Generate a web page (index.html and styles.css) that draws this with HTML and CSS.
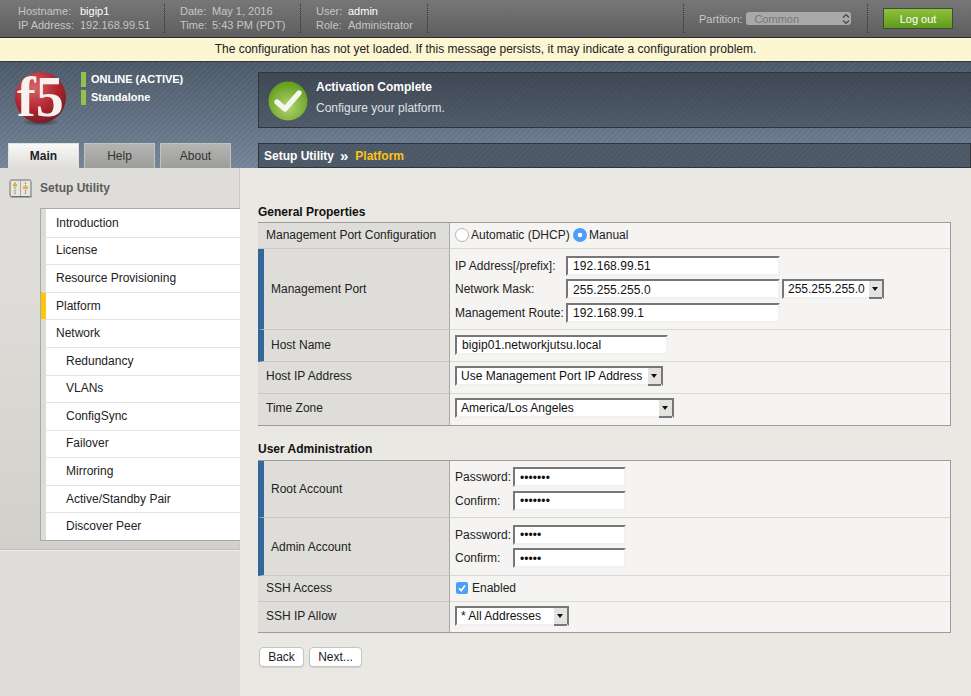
FILE: index.html
```html
<!DOCTYPE html>
<html lang="en">
<head>
<meta charset="utf-8">
<title>BIG-IP Setup Utility</title>
<link rel="stylesheet" href="styles.css">
</head>
<body>
<header class="topbar">
  <div class="meta meta-host">
    <span>Hostname:</span><b>bigip1</b>
    <span>IP Address:</span><span>192.168.99.51</span>
  </div>
  <div class="meta meta-date">
    <span>Date:</span><span>May 1, 2016</span>
    <span>Time:</span><span>5:43 PM (PDT)</span>
  </div>
  <div class="meta meta-user">
    <span>User:</span><b>admin</b>
    <span>Role:</span><span>Administrator</span>
  </div>
  <div class="partition">
    <label class="partition-label">Partition:</label>
    <div class="partition-select">
      <span>Common</span>
      <svg width="8" height="12" viewBox="0 0 8 12" fill="none" stroke="#444" stroke-width="1.2"><path d="M1 4.5 4 1.5 7 4.5M1 7.5 4 10.5 7 7.5"/></svg>
    </div>
  </div>
  <div class="logout-wrap"><button class="logout" type="button">Log out</button></div>
</header>
<div class="message">The configuration has not yet loaded. If this message persists, it may indicate a configuration problem.</div>
<section class="banner">
  <div class="banner-left">
    <div class="identity">
      <svg class="logo" width="62" height="72" viewBox="0 -8 62 72">
        <defs>
          <radialGradient id="ball" cx="0.38" cy="0.3" r="0.8">
            <stop offset="0" stop-color="#d9636b"/>
            <stop offset="0.55" stop-color="#b1252f"/>
            <stop offset="1" stop-color="#6d1a20"/>
          </radialGradient>
          <radialGradient id="shade" cx="0.5" cy="0.5" r="0.5">
            <stop offset="0" stop-color="#1f2730" stop-opacity="0.75"/>
            <stop offset="1" stop-color="#1f2730" stop-opacity="0"/>
          </radialGradient>
        </defs>
        <ellipse cx="25.5" cy="50" rx="19" ry="4" fill="url(#shade)"/>
        <circle cx="25.5" cy="25.5" r="25.5" fill="url(#ball)"/>
        <text x="2" y="44" class="logo-text">f5</text>
      </svg>
      <ul class="status">
        <li>ONLINE (ACTIVE)</li>
        <li>Standalone</li>
      </ul>
    </div>
    <nav class="tabs">
      <a class="tab tab-active">Main</a>
      <a class="tab">Help</a>
      <a class="tab">About</a>
    </nav>
  </div>
  <div class="banner-right">
    <div class="notice">
      <svg width="40" height="40" viewBox="0 0 40 40">
        <defs>
          <radialGradient id="okball" cx="0.5" cy="0.65" r="0.6">
            <stop offset="0" stop-color="#b3d56f"/>
            <stop offset="1" stop-color="#64a01f"/>
          </radialGradient>
        </defs>
        <circle cx="20" cy="20" r="19.5" fill="url(#okball)"/>
        <path d="M9 21 17 28 31 12" fill="none" stroke="#f4f7ee" stroke-width="5.4" stroke-linecap="round" stroke-linejoin="round"/>
      </svg>
      <div class="notice-text">
        <strong>Activation Complete</strong>
        <span>Configure your platform.</span>
      </div>
    </div>
    <div class="crumbs"><b>Setup Utility</b><b class="crumb-sep">&raquo;</b><b class="crumb-current">Platform</b></div>
  </div>
</section>
<div class="workspace">
  <aside class="sidebar">
    <div class="side-top">
      <div class="side-title">
        <svg width="23" height="19" viewBox="0 0 23 19">
          <rect x="1" y="1" width="21" height="16.5" rx="1.5" fill="#e6e5e0" stroke="#6f6f6c"/>
          <path d="M1.5 18.5H22.5V3" fill="none" stroke="#a5a5a1"/>
          <path d="M11.5 1.5V17" stroke="#a7a7a3"/>
          <path d="M6 3.5V15M16.5 3.5V15" stroke="#77776f" stroke-dasharray="1.5 1"/>
          <rect x="4" y="5" width="4" height="2.5" fill="#e2b420"/>
          <rect x="14" y="7.5" width="5" height="2.5" fill="#e2b420"/>
        </svg>
        <span>Setup Utility</span>
      </div>
      <ul class="side-nav">
        <li>Introduction</li>
        <li>License</li>
        <li>Resource Provisioning</li>
        <li class="current">Platform</li>
        <li>Network</li>
        <li class="sub">Redundancy</li>
        <li class="sub">VLANs</li>
        <li class="sub">ConfigSync</li>
        <li class="sub">Failover</li>
        <li class="sub">Mirroring</li>
        <li class="sub">Active/Standby Pair</li>
        <li class="sub">Discover Peer</li>
      </ul>
    </div>
  </aside>
  <main class="content">
    <h2 class="section-title">General Properties</h2>
    <table class="props">
      <colgroup><col class="col-label"><col></colgroup>
      <tr class="h26">
        <th>Management Port Configuration</th>
        <td class="inline-cell">
          <label class="choice"><input type="radio" name="cfg" class="radio"> Automatic (DHCP)</label>
          <label class="choice"><input type="radio" name="cfg" class="radio" checked> Manual</label>
        </td>
      </tr>
      <tr class="h81">
        <th class="req">Management Port</th>
        <td>
          <div class="fields fields-wide">
            <label>IP Address[/prefix]:</label><input class="field w214" value="192.168.99.51">
            <label>Network Mask:</label>
            <div class="with-select"><input class="field w214" value="255.255.255.0"><div class="select w102"><select><option>255.255.255.0</option></select><i class="arrow"></i></div></div>
            <label>Management Route:</label><input class="field w214" value="192.168.99.1">
          </div>
        </td>
      </tr>
      <tr class="h32">
        <th class="req">Host Name</th>
        <td><input class="field w213" value="bigip01.networkjutsu.local"></td>
      </tr>
      <tr class="h32 lifted">
        <th>Host IP Address</th>
        <td><div class="select w208"><select><option>Use Management Port IP Address</option></select><i class="arrow"></i></div></td>
      </tr>
      <tr class="h31 lifted">
        <th>Time Zone</th>
        <td><div class="select w219"><select><option>America/Los Angeles</option></select><i class="arrow"></i></div></td>
      </tr>
    </table>

    <h2 class="section-title second">User Administration</h2>
    <table class="props">
      <colgroup><col class="col-label"><col></colgroup>
      <tr class="h57">
        <th class="req">Root Account</th>
        <td>
          <div class="fields fields-pass">
            <label>Password:</label><input type="password" class="field w113" value="1234567">
            <label>Confirm:</label><input type="password" class="field w113" value="1234567">
          </div>
        </td>
      </tr>
      <tr class="h58">
        <th class="req">Admin Account</th>
        <td>
          <div class="fields fields-pass">
            <label>Password:</label><input type="password" class="field w113" value="12345">
            <label>Confirm:</label><input type="password" class="field w113" value="12345">
          </div>
        </td>
      </tr>
      <tr class="h26">
        <th>SSH Access</th>
        <td class="inline-cell">
          <label class="choice">
            <span class="check"><svg width="12" height="12" viewBox="0 0 12 12"><path d="M3 6.2 5.2 8.6 9 3.4" fill="none" stroke="#fff" stroke-width="1.7"/></svg></span>
            Enabled
          </label>
        </td>
      </tr>
      <tr class="h30">
        <th>SSH IP Allow</th>
        <td><div class="select w114"><select><option>* All Addresses</option></select><i class="arrow"></i></div></td>
      </tr>
    </table>
    <div class="actions">
      <button type="button" class="btn btn-back">Back</button>
      <button type="button" class="btn btn-next">Next...</button>
    </div>
  </main>
</div>
</body>
</html>
```

FILE: styles.css
```css
* { box-sizing: border-box; }
html, body { margin: 0; padding: 0; height: 100%; overflow: hidden; }
body { width: 971px; height: 696px; font: 12px/14px "Liberation Sans", Arial, sans-serif; color: #222; background: #e9e8e3; }
ul { list-style: none; margin: 0; padding: 0; }

.topbar { display: flex; height: 38px; background: linear-gradient(#777, #5e5e5e); border-bottom: 1px solid #2c2c2c; color: #c6c6c6; font-size: 11px; }
.meta { display: grid; align-content: center; height: 29px; margin-top: 4px; padding-bottom: 2px; border-right: 1px dotted #2f2f2f; line-height: 14px; }
.meta b { font-weight: normal; color: #fff; }
.meta-host { width: 165px; padding-left: 18px; grid-template-columns: 62px 1fr; }
.meta-date { width: 136px; padding-left: 15px; grid-template-columns: 32px 1fr; }
.meta-user { width: 127px; padding-left: 15px; grid-template-columns: 32px 1fr; }
.partition { display: flex; align-items: center; gap: 4px; margin-left: auto; width: 185px; height: 29px; margin-top: 4px; padding-left: 15px; border-left: 1px dotted #2f2f2f; border-right: 1px dotted #2f2f2f; }
.partition-select { display: flex; align-items: center; justify-content: space-between; width: 105px; height: 13px; padding: 0 1px 0 8px; border-radius: 3px; background: #a9a9a9; color: #777; }
.logout-wrap { width: 103px; padding: 8px 0 0 15px; }
.logout { display: block; width: 70px; height: 21px; padding: 0; border: 1px solid #3f4a3a; background: linear-gradient(#8fc13b, #5f9a1c); color: #fff; font: 11px "Liberation Sans", Arial, sans-serif; }

.message { height: 24px; background: #fdf6d3; border-bottom: 1px solid #34373b; text-align: center; line-height: 23px; color: #222; }

.banner { display: flex; height: 106px; background: repeating-linear-gradient(135deg, rgba(255,255,255,0.025) 0 2px, rgba(0,0,0,0.025) 2px 4px), linear-gradient(#4d5a6a, #76859a); }
.banner-left { display: flex; flex-direction: column; justify-content: space-between; width: 258px; }
.identity { display: flex; height: 74px; padding: 10px 0 0 15px; }
.logo { flex: none; margin-top: -8px; }
.logo-text { font: bold 56px "Liberation Serif", serif; fill: #f6f2ee; }
.status { margin-left: 4px; font-weight: bold; font-size: 11px; color: #fff; }
.status li { height: 15px; margin-bottom: 3px; padding-left: 5px; border-left: 5px solid #93c04f; line-height: 15px; }
.tabs { display: flex; gap: 5px; padding-left: 8px; }
.tab { display: block; width: 71px; height: 25px; background: linear-gradient(#b4b4b2, #9d9d9b); border: 1px solid #c2c2c0; border-bottom: 0; text-align: center; line-height: 25px; color: #333; }
.tab-active { background: linear-gradient(#f8f8f7, #deddd9); border-color: #e3e3e1; font-weight: bold; color: #1e2329; }
.banner-right { flex: 1; padding-top: 10px; }
.notice { display: flex; align-items: center; gap: 8px; height: 56px; padding: 2px 0 0 9px; border: 1px solid #30353b; border-right: 0; background: repeating-linear-gradient(135deg, rgba(255,255,255,0.015) 0 2px, rgba(0,0,0,0.02) 2px 4px), linear-gradient(#3f4753, #4e5b6a); }
.notice-text { display: flex; flex-direction: column; gap: 7px; margin-bottom: 8px; color: #dfe2e5; }
.notice-text strong { color: #fff; }
.crumbs { display: flex; align-items: center; gap: 6px; height: 25px; margin-top: 15px; padding-left: 5px; border: 1px solid #30353b; background: repeating-linear-gradient(135deg, rgba(255,255,255,0.02) 0 2px, rgba(0,0,0,0.02) 2px 4px), #4c5967; color: #fff; }
.crumb-sep { font-size: 15px; }
.crumb-current { margin-left: 1px; color: #fdc311; }

.workspace { display: flex; height: 528px; }
.sidebar { width: 240px; background: #deddd9; }
.side-top { width: 240px; height: 382px; border-bottom: 1px solid #c2c1bb; border-right: 1px solid #c9c8c2; background: linear-gradient(#deddd9 0 30%, #d1d0ca); box-shadow: 0 1px 0 #ecebe8; }
.side-title { display: flex; align-items: center; gap: 8px; height: 40px; padding: 0 0 0 9px; font-weight: bold; color: #5b5b5b; }
.side-nav { display: grid; grid-auto-rows: 1fr; width: 200px; height: 333px; margin-left: 40px; background: #fff; border: solid #a9a9a6; border-width: 1px 0 1px 1px; }
.side-nav li { display: flex; align-items: center; padding: 0 0 1px 10px; border-left: 5px solid #dcdbd7; border-top: 1px solid #e2e2e0; }
.side-nav li:first-child { border-top: 0; padding-bottom: 0; }
.side-nav .current { border-left-color: #fdc70f; }
.side-nav .sub { padding-left: 20px; }

.content { flex: 1; padding: 37px 20px 0 18px; }
.section-title { margin: 0 0 3px; font-size: 12px; line-height: 14px; color: #111; }
.section-title.second { margin-top: 16px; margin-bottom: 4px; }
.props { width: 693px; table-layout: fixed; border-collapse: separate; border-spacing: 0; border: solid #9c9c9a; border-width: 1px 1px 1px 0; background: #f5f4f2; }
.col-label { width: 192px; }
.props th { padding: 0 0 0 8px; border-right: 1px solid #a9a9a6; border-bottom: 1px solid #c8c8c5; background: #deddd9; font-weight: normal; text-align: left; }
.props th.req { padding-left: 7px; border-left: 6px solid #34689b; }
.props td { padding: 0 0 0 5px; border-bottom: 1px solid #d8d8d5; }
.props tr:last-child th, .props tr:last-child td { border-bottom: 0; }
.props .h26 th, .props .h26 td, .props .h30 th, .props .h30 td, .props .h32 th, .props .h32 td { padding-bottom: 2px; }
.props .lifted th, .props .lifted td { padding-bottom: 4px; }
.h26 { height: 26px; } .h30 { height: 30px; } .h31 { height: 31px; } .h32 { height: 32px; } .h57 { height: 57px; } .h58 { height: 58px; } .h81 { height: 81px; }

.inline-cell { white-space: nowrap; }
.choice { display: inline-flex; align-items: center; gap: 2px; vertical-align: middle; }
.radio { appearance: none; width: 14px; height: 14px; margin: 0; border: 1px solid #b5b5b5; border-radius: 50%; background: #fff; }
.radio:checked { border: 0; background: radial-gradient(circle, #fff 0 2px, #4b9ffb 2.6px); }
.check { display: block; width: 12px; height: 12px; margin: 0 2px 0 1px; border-radius: 2px; background: #4b9ffb; }
.check svg { display: block; }

.field { display: block; height: 20px; padding: 1px 0 0 5px; border: 2px solid; border-color: #777 #f2f1ef #f2f1ef #777; background: #fff; font: 12px "Liberation Sans", Arial, sans-serif; color: #111; letter-spacing: 0.07px; outline: 0; }
.w113 { width: 113px; } .w213 { width: 213px; } .w214 { width: 214px; }
.fields { display: grid; align-items: center; row-gap: 3.5px; }
.fields-wide { grid-template-columns: 111px auto; }
.fields-pass { grid-template-columns: 58px auto; }
.with-select { display: flex; gap: 2px; }

.select { position: relative; height: 20px; }
.select select { display: block; width: 100%; height: 100%; padding: 0 0 0 4px; border: 2px solid; border-color: #777 #777 #f2f1ef #777; background: #fff; appearance: none; font: 12px "Liberation Sans", Arial, sans-serif; color: #111; border-radius: 0; }
.arrow { position: absolute; right: 2px; top: 2px; bottom: 0; width: 13px; background: #e4e3df; border-bottom: 2px solid #777; }
.arrow::after { content: ""; position: absolute; left: 3px; top: 6px; border: 3.5px solid transparent; border-top: 4px solid #111; border-bottom: 0; }
.w102 { width: 102px; } .w114 { width: 114px; } .w208 { width: 208px; } .w219 { width: 219px; }

.actions { display: flex; gap: 5px; margin-top: 14px; padding-left: 1px; }
.btn { height: 20px; padding: 0; border: 1px solid #c4c4c2; border-radius: 4px; background: #fff; box-shadow: 0 1px 1px rgba(0,0,0,0.1); font: 12px "Liberation Sans", Arial, sans-serif; color: #222; }
.btn-back { width: 45px; }
.btn-next { width: 53px; }
```
